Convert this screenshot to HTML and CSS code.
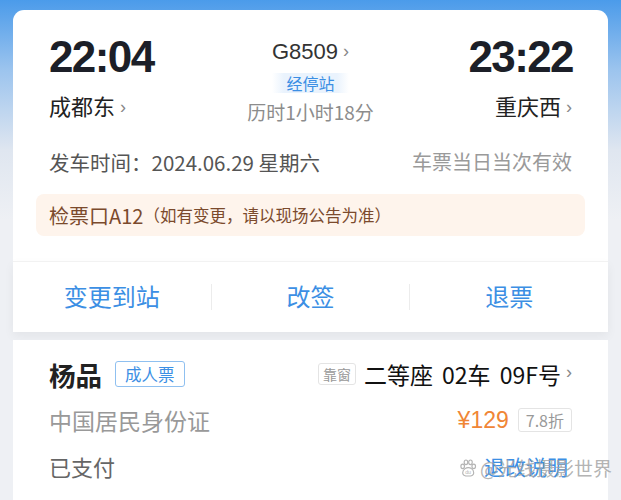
FILE: index.html
```html
<!DOCTYPE html>
<html>
<head>
  <meta charset="utf-8">
  <link rel="stylesheet" href="styles.css">
</head>
<body>
<div class="page">

  <div class="card trip">
    <div class="route">
      <div class="end">
        <div class="time">22:04</div>
        <div class="station">成都东<span class="arrow">›</span></div>
      </div>
      <div class="mid">
        <div class="train">G8509<span class="arrow">›</span></div>
        <div class="stops">经停站</div>
        <div class="duration">历时1小时18分</div>
      </div>
      <div class="end right">
        <div class="time">23:22</div>
        <div class="station">重庆西<span class="arrow">›</span></div>
      </div>
    </div>
    <div class="date-row">
      <span>发车时间：2024.06.29 星期六</span>
      <span class="valid">车票当日当次有效</span>
    </div>
    <div class="gate">
      <span class="gate-no">检票口A12</span><span class="gate-note">（如有变更，请以现场公告为准）</span>
    </div>
  </div>

  <div class="card actions">
    <div class="action">变更到站</div>
    <div class="sep"></div>
    <div class="action">改签</div>
    <div class="sep"></div>
    <div class="action">退票</div>
  </div>

  <div class="card passenger">
    <div class="p-row">
      <div class="who">
        <span class="name">杨品</span>
        <span class="tag adult">成人票</span>
      </div>
      <div class="seat">
        <span class="tag window">靠窗</span>
        <span class="seat-no">二等座 02车 09F号</span><span class="arrow">›</span>
      </div>
    </div>
    <div class="p-row">
      <span class="idtype">中国居民身份证</span>
      <div class="price">
        <span class="amount">¥129</span>
        <span class="tag discount">7.8折</span>
      </div>
    </div>
    <div class="p-row">
      <span class="paid">已支付</span>
      <span class="rules">退改说明</span>
    </div>
  </div>

  <div class="watermark">
    <svg width="18" height="20" viewBox="0 0 22 22">
      <g fill="none" stroke="#b4b4b4" stroke-width="1.4">
        <ellipse cx="4.5" cy="9" rx="2.2" ry="2.8"/>
        <ellipse cx="8.5" cy="4" rx="2.2" ry="2.8"/>
        <ellipse cx="14" cy="4" rx="2.2" ry="2.8"/>
        <ellipse cx="18" cy="9" rx="2.2" ry="2.8"/>
        <path d="M4.5 17 C4.5 12.5 9 10.5 11.3 10.5 C14 10.5 18 12.5 18 17 C18 20 15 20.8 11.3 20.8 C7.8 20.8 4.5 20 4.5 17 Z"/>
      </g>
      <text x="7.5" y="18.8" font-size="6.5" fill="#b4b4b4" font-family="Liberation Sans, sans-serif">du</text>
    </svg>
    <span>@光线摄影世界</span>
  </div>

</div>
</body>
</html>
```

FILE: styles.css
```css
html, body {
  margin: 0;
  padding: 0;
}

body {
  width: 621px;
  height: 500px;
  overflow: hidden;
  font-family: "Noto Sans CJK SC", "Noto Sans", sans-serif;
  background: linear-gradient(to bottom, #4b9bea 0px, #9cc4ee 70px, #dfe6f0 150px, #eef0f4 220px, #eef0f4 100%);
}

.page {
  position: relative;
  padding: 10px 13px 0;
}

.card {
  background: #fff;
}

.trip {
  border-radius: 11px 11px 0 0;
  padding: 24px 36px 25px;
}

.route {
  display: grid;
  grid-template-columns: 1fr 1fr 1fr;
}

.time {
  font-family: "Liberation Sans", sans-serif;
  font-weight: bold;
  font-size: 44px;
  line-height: 46px;
  color: #1c1f28;
  letter-spacing: -1.6px;
}

.right .time {
  margin-right: -1px;
}

.station {
  font-size: 22px;
  line-height: 32px;
  margin-top: 9px;
  color: #222;
}

.arrow {
  font-family: "Liberation Sans", sans-serif;
  color: #888;
  font-size: 18px;
  margin-left: 5px;
  position: relative;
  top: -2px;
}

.right {
  text-align: right;
}

.mid {
  display: flex;
  flex-direction: column;
  align-items: center;
}

.train {
  font-family: "Liberation Sans", sans-serif;
  font-size: 22px;
  line-height: 26px;
  margin-top: 5px;
  color: #333;
}

.stops {
  margin-top: 7px;
  font-size: 16px;
  line-height: 20px;
  padding: 0 14px;
  color: #3c8fe4;
  background: linear-gradient(to right, rgba(234,243,253,0) 0, #eaf3fd 12px, #eaf3fd calc(100% - 12px), rgba(234,243,253,0) 100%);
}

.duration {
  margin-top: 6px;
  font-size: 19px;
  line-height: 26px;
  color: #8c8c8c;
}

.date-row {
  display: flex;
  justify-content: space-between;
  margin-top: 23px;
  font-size: 20.5px;
  line-height: 28px;
  color: #555;
}

.valid {
  font-size: 20px;
  color: #9a9a9a;
}

.gate {
  margin: 18px -13px 0;
  padding: 0 13px;
  height: 42px;
  display: flex;
  align-items: center;
  background: #fef4ec;
  border-radius: 8px;
}

.gate-no {
  font-size: 20px;
  color: #7b4a2c;
}

.gate-note {
  font-size: 16.5px;
  color: #7b4a2c;
}

.actions {
  height: 70px;
  display: flex;
  align-items: center;
  box-shadow: 0 4px 10px rgba(0, 0, 0, 0.05);
  border-top: 1px solid #f2f2f2;
}

.action {
  flex: 1;
  text-align: center;
  font-size: 24px;
  color: #3c8fe4;
  padding-bottom: 3px;
}

.sep {
  width: 1px;
  height: 26px;
  background: #ececec;
}

.passenger {
  margin-top: 8px;
  padding: 11px 36px 0 36px;
  height: 160px;
}

.p-row {
  display: flex;
  justify-content: space-between;
  align-items: center;
  height: 46px;
}

.who, .seat, .price {
  display: flex;
  align-items: center;
}

.name {
  font-size: 26.5px;
  font-weight: bold;
  color: #222;
}

.tag {
  border-radius: 3px;
  line-height: 1;
}

.adult {
  margin-left: 13px;
  font-size: 16.5px;
  color: #3c8fe4;
  border: 1px solid #8fc0f0;
  padding: 4px 9px;
}

.window {
  font-size: 14px;
  color: #999;
  border: 1px solid #e4e4e4;
  padding: 3px 4px;
  margin-right: 8px;
}

.seat-no {
  font-size: 23px;
  word-spacing: 4px;
  color: #111;
}

.idtype {
  font-size: 23px;
  color: #999;
}

.amount {
  font-family: "Liberation Sans", sans-serif;
  font-size: 23px;
  color: #f08636;
}

.discount {
  margin-left: 9px;
  font-size: 16px;
  color: #999;
  border: 1px solid #e4e4e4;
  padding: 3px 7px;
}

.paid {
  font-size: 22px;
  color: #666;
}

.rules {
  font-size: 21px;
  color: #3c8fe4;
  margin-right: 4px;
}

.watermark {
  position: absolute;
  left: 459px;
  top: 454px;
  display: flex;
  align-items: center;
  gap: 3px;
  font-size: 19px;
  color: rgba(160, 160, 160, 0.8);
}
```
